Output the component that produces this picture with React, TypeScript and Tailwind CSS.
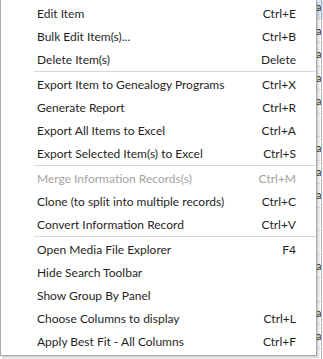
import type { ReactNode } from "react";

type MenuEntry =
  | { kind: "item"; label: string; shortcut?: string; disabled?: boolean }
  | { kind: "separator" };

const entries: MenuEntry[] = [
  { kind: "item", label: "Edit Item", shortcut: "Ctrl+E" },
  { kind: "item", label: "Bulk Edit Item(s)...", shortcut: "Ctrl+B" },
  { kind: "item", label: "Delete Item(s)", shortcut: "Delete" },
  { kind: "separator" },
  { kind: "item", label: "Export Item to Genealogy Programs", shortcut: "Ctrl+X" },
  { kind: "item", label: "Generate Report", shortcut: "Ctrl+R" },
  { kind: "item", label: "Export All Items to Excel", shortcut: "Ctrl+A" },
  { kind: "item", label: "Export Selected Item(s) to Excel", shortcut: "Ctrl+S" },
  { kind: "separator" },
  { kind: "item", label: "Merge Information Records(s)", shortcut: "Ctrl+M", disabled: true },
  { kind: "item", label: "Clone (to split into multiple records)", shortcut: "Ctrl+C" },
  { kind: "item", label: "Convert Information Record", shortcut: "Ctrl+V" },
  { kind: "separator" },
  { kind: "item", label: "Open Media File Explorer", shortcut: "F4" },
  { kind: "item", label: "Hide Search Toolbar" },
  { kind: "item", label: "Show Group By Panel" },
  { kind: "item", label: "Choose Columns to display", shortcut: "Ctrl+L" },
  { kind: "item", label: "Apply Best Fit - All Columns", shortcut: "Ctrl+F" },
];

// grid rows peeking out behind the menu on the right
const gridRows = [true, true, true, true, true, false, true, true, true, false, false, true, false, true, true, false];

export default function App() {
  return (
    <div
      className="relative w-[323px] h-[359px] overflow-hidden bg-white text-[12px] text-[#1f1f1f]"
      style={{ fontFamily: 'Lato, "Noto Sans", sans-serif' }}
    >
      <BackgroundGrid />
      <div className="absolute left-0 top-0 w-[317px] border border-t-0 border-[#a9a9a9] bg-white pt-[2px] pb-[2px] shadow-[2px_2px_2px_rgba(0,0,0,0.18)]">
        {entries.map((entry, i) =>
          entry.kind === "separator" ? (
            <div key={i} className="ml-[33px] mb-px h-px bg-[#d7d7d7]" />
          ) : (
            <MenuItem key={i} shortcut={entry.shortcut} disabled={entry.disabled}>
              {entry.label}
            </MenuItem>
          )
        )}
      </div>
    </div>
  );
}

function MenuItem({
  children,
  shortcut,
  disabled,
}: {
  children: ReactNode;
  shortcut?: string;
  disabled?: boolean;
}) {
  return (
    <div
      className={`flex h-[23px] items-center pl-[36px] pr-[20px] ${
        disabled ? "text-[#a3a3a3]" : ""
      }`}
    >
      <span className="flex-1 whitespace-nowrap">{children}</span>
      {shortcut ? <span className="whitespace-nowrap">{shortcut}</span> : null}
    </div>
  );
}

function BackgroundGrid() {
  return (
    <div className="-mt-[4px] flex flex-col pl-[316px]">
      {gridRows.map((hasText, i) => (
        <div
          key={i}
          className={`flex h-[23.5px] items-center border-b border-[#e3e3e3] ${
            i === 0 ? "bg-[#dcecfa]" : ""
          }`}
        >
          <span className="w-[5px] overflow-hidden whitespace-nowrap text-[11px] text-[#333]">
            {hasText ? "a" : ""}
          </span>
          <div className="h-full w-px bg-[#b4b4b4]" />
        </div>
      ))}
    </div>
  );
}
